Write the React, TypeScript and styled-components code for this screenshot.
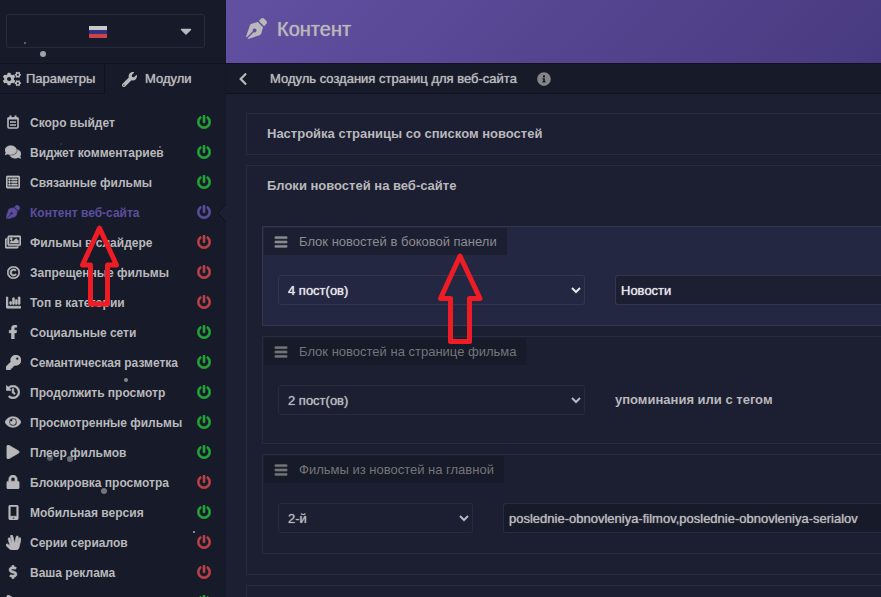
import React from "react";
import styled, { createGlobalStyle, css } from "styled-components";
import type { IconType } from "react-icons";
import {
  FaBars, FaCaretDown, FaChartBar, FaChevronLeft, FaCogs, FaComments, FaDollarSign,
  FaEye, FaFacebookF, FaHandSpock, FaHistory, FaInfoCircle, FaKey, FaLock, FaMobileAlt,
  FaPenNib, FaPlay, FaPowerOff, FaRegCopyright, FaRegImages, FaRegListAlt, FaWrench,
} from "react-icons/fa";

const colors = {
  side: "#161a29",
  page: "#1c1e32",
  line: "#282b3e",
  dark: "#10131f",
  text: "#b9b9bb",
  accent: "#5e4d9e",
  on: "#24a538",
  off: "#bc4248",
};

const GlobalStyle = createGlobalStyle`
  *, *::before, *::after { box-sizing: border-box; }
  body {
    margin: 0;
    background: ${colors.page};
    color: ${colors.text};
    font: 700 13px/20px "Liberation Sans", Arial, sans-serif;
  }
  button, select, input { font: inherit; color: inherit; }
  h1, h2, ul { margin: 0; padding: 0; }
`;

const Page = styled.div`
  position: relative;
  display: flex;
  height: 100vh;
  overflow: hidden;
`;

const Sidebar = styled.aside`
  flex: 0 0 226px;
  background: ${colors.side};
  border-right: 1px solid #14172a;
`;

const LanguageArea = styled.div`
  height: 63px;
  padding: 14px 20px 0 6px;
`;

const LanguageButton = styled.button`
  display: flex;
  align-items: center;
  width: 100%;
  height: 34px;
  padding: 0 9px 0 12px;
  background: none;
  border: 1px solid ${colors.line};
  border-radius: 3px;
  > svg:first-child { margin: 2px auto 0; }
`;

const Tabs = styled.nav`
  display: flex;
  height: 44px;
  border-top: 1px solid ${colors.dark};
`;

const Tab = styled.button<{ $first?: boolean }>`
  display: flex;
  align-items: center;
  gap: ${(p) => (p.$first ? 5 : 8)}px;
  flex: 0 0 ${(p) => (p.$first ? 105 : 120)}px;
  height: 30px;
  padding: 0 0 0 ${(p) => (p.$first ? 3 : 17)}px;
  background: none;
  border: 0;
  font-weight: 400;
  text-shadow: 0 0 1px ${colors.text};
  ${(p) => p.$first && css`
    border-right: 1px solid ${colors.dark};
    border-bottom: 1px solid ${colors.dark};
  `}
`;

const ModuleList = styled.ul`list-style: none;`;

const ModuleRow = styled.li<{ $active?: boolean }>`
  position: relative;
  display: flex;
  align-items: center;
  height: 30px;
  padding-right: 14px;
  color: ${(p) => (p.$active ? colors.accent : colors.text)};
`;

const ModuleLink = styled.a`
  display: flex;
  align-items: center;
  flex: 1;
  color: inherit;
  text-decoration: none;
  font-size: 12px;
  white-space: nowrap;
`;

const ModuleLabel = styled.span`padding-top: 2px;`;

const IconCell = styled.span`
  display: grid;
  place-items: center;
  flex: 0 0 26px;
  margin-right: 4px;
  > svg { stroke-width: 22; }
`;

const PowerButton = styled.button<{ $color: string }>`
  display: flex;
  padding: 0;
  border: 0;
  background: none;
  color: ${(p) => p.$color};
  > svg { stroke-width: 16; }
`;

const Notch = styled.svg`
  position: absolute;
  right: -1px;
  top: 7px;
`;

const Main = styled.main`
  flex: 1;
  min-width: 0;
`;

const Banner = styled.header`
  display: flex;
  align-items: center;
  gap: 10px;
  height: 63px;
  padding: 0 20px 6px;
  background: linear-gradient(135deg, #6250a1 0%, #483a80 100%);
`;

const Title = styled.h1`
  font-size: 20px;
  line-height: 24px;
  font-weight: 400;
  text-shadow: 0 0 1px ${colors.text};
`;

const SubBar = styled.div`
  display: flex;
  align-items: center;
  height: 31px;
  padding-left: 10px;
  background: ${colors.side};
  border-top: 1px solid ${colors.dark};
  border-bottom: 1px solid ${colors.dark};
`;

const IconButton = styled.button`
  display: flex;
  padding: 0;
  border: 0;
  background: none;
`;

const SubTitle = styled.h2`
  margin: 0 20px;
  font-size: 13px;
  line-height: 20px;
  font-weight: 400;
  text-shadow: 0 0 1px ${colors.text};
  white-space: nowrap;
`;

const Content = styled.div`
  display: flex;
  flex-direction: column;
  gap: 10px;
  padding: 19px 0 0 20px;
`;

const Panel = styled.section`
  flex: none;
  min-height: 42px;
  border: 1px solid ${colors.line};
  border-right: 0;
`;

const PanelTitle = styled.h2`
  padding: 10px 20px;
  font-size: 13px;
  line-height: 20px;
`;

const Blocks = styled.div`
  display: flex;
  flex-direction: column;
  gap: 10px;
  padding: 20px 0 20px 15px;
`;

const Block = styled.section<{ $lit?: boolean; $tall?: boolean }>`
  padding: 1px 0 ${(p) => (p.$tall ? 28 : 20)}px 1px;
  border: 1px solid ${(p) => (p.$lit ? "#34374c" : colors.line)};
  border-right: 0;
  background: ${(p) => (p.$lit ? "#242741" : "transparent")};
  color: ${(p) => (p.$lit ? "#e6e6e8" : colors.text)};
`;

const BlockTitle = styled.h2<{ $lit?: boolean }>`
  display: inline-flex;
  align-items: center;
  gap: 11px;
  height: 27px;
  padding: 0 10px;
  background: ${(p) => (p.$lit ? colors.page : colors.side)};
  color: ${(p) => (p.$lit ? "#8c8c8f" : "#757578")};
  font-size: 13px;
  font-weight: 400;
  vertical-align: top;
  > svg { stroke-width: 24; }
`;

const Fields = styled.div<{ $narrow?: boolean }>`
  display: grid;
  grid-template-columns: ${(p) => (p.$narrow ? 195 : 307)}px 1fr;
  column-gap: 30px;
  align-items: center;
  padding: 20px 0 0 14px;
`;

const control = css`
  width: 100%;
  height: 30px;
  font-weight: 400;
  text-shadow: 0 0 1px currentColor;
  outline: 0;
`;

const Select = styled.select<{ $lit?: boolean }>`
  ${control}
  padding: 0 6px 0 5px;
  background: ${(p) => (p.$lit ? "#242741" : colors.page)};
  border: 1px solid ${(p) => (p.$lit ? "#34374c" : colors.line)};
  border-radius: 3px;
`;

const TextInput = styled.input<{ $lit?: boolean }>`
  ${control}
  padding: 0 5px;
  background: ${(p) => (p.$lit ? colors.page : colors.side)};
  border: 1px solid ${(p) => (p.$lit ? "#34374c" : colors.line)};
  border-right: 0;
  border-radius: 3px 0 0 3px;
`;

const Overlay = styled.svg`
  position: absolute;
  inset: 0;
  pointer-events: none;
`;

const CalendarIcon = ({ size = 14 }: { size?: number }) => (
  <svg width={size} height={size} viewBox="0 0 14 14" aria-hidden="true">
    <g fill="none" stroke="currentColor">
      <rect x="2" y="3" width="10" height="10" rx="1" strokeWidth="1.6" />
      <path d="M1.500 3.500H12.500" strokeWidth="2" />
      <path d="M4.500 0.500V3M9.500 0.500V3" strokeWidth="2" />
      <path d="M4 7H10M4 10H10" strokeWidth="1.500" />
    </g>
  </svg>
);

const Flag = () => (
  <svg width="18" height="12" role="img" aria-label="Русский">
    <rect width="18" height="4" fill="#c9c9c9" />
    <rect y="4" width="18" height="4" fill="#37307f" />
    <rect y="8" width="18" height="4" fill="#c94349" />
  </svg>
);

type Module = { label: string; icon: IconType | typeof CalendarIcon; on?: boolean; active?: boolean; size?: number };

const modules: Module[] = [
  { label: "Скоро выйдет", icon: CalendarIcon, on: true },
  { label: "Виджет комментариев", icon: FaComments, on: true, size: 16 },
  { label: "Связанные фильмы", icon: FaRegListAlt, on: true },
  { label: "Контент веб-сайта", icon: FaPenNib, active: true },
  { label: "Фильмы в слайдере", icon: FaRegImages, size: 16 },
  { label: "Запрещенные фильмы", icon: FaRegCopyright, size: 13 },
  { label: "Топ в категории", icon: FaChartBar, size: 15 },
  { label: "Социальные сети", icon: FaFacebookF, on: true },
  { label: "Семантическая разметка", icon: FaKey, on: true, size: 15 },
  { label: "Продолжить просмотр", icon: FaHistory, on: true },
  { label: "Просмотренные фильмы", icon: FaEye, on: true, size: 16 },
  { label: "Плеер фильмов", icon: FaPlay, on: true },
  { label: "Блокировка просмотра", icon: FaLock },
  { label: "Мобильная версия", icon: FaMobileAlt, on: true, size: 15 },
  { label: "Серии сериалов", icon: FaHandSpock, size: 15 },
  { label: "Ваша реклама", icon: FaDollarSign },
  { label: "", icon: FaPlay, on: true },
];

const particles: [number, number, number, number][] = [
  [25, 43, 1, 0.5], [43, 54, 3, 0.75], [126, 380, 2, 0.6], [110, 420, 2, 0.3],
  [50, 458, 3, 0.35], [70, 459, 3, 0.45], [104, 491, 3, 0.5], [194, 532, 1, 0.8],
  [160, 147, 1, 0.5], [61, 144, 1, 0.15],
];

type BlockProps = {
  title: string; choice: string; name: string; value?: string; note?: string;
  lit?: boolean; narrow?: boolean; tall?: boolean;
};

const NewsBlock = ({ title, choice, name, value, note, lit, narrow, tall }: BlockProps) => (
  <Block $lit={lit} $tall={tall}>
    <BlockTitle $lit={lit}><FaBars size={14} />{title}</BlockTitle>
    <Fields $narrow={narrow}>
      <Select $lit={lit} aria-label={title} name={name} defaultValue={choice}>
        <option>{choice}</option>
      </Select>
      {note ? <span>{note}</span> : (
        <TextInput $lit={lit} aria-label={title} name={`${name}-value`} defaultValue={value} />
      )}
    </Fields>
  </Block>
);

export default function App() {
  return (
    <>
      <GlobalStyle />
      <Page>
        <Sidebar>
          <LanguageArea>
            <LanguageButton type="button"><Flag /><FaCaretDown size={18} /></LanguageButton>
          </LanguageArea>
          <Tabs>
            <Tab type="button" $first><FaCogs size={18} />Параметры</Tab>
            <Tab type="button"><FaWrench size={15} />Модули</Tab>
          </Tabs>
          <ModuleList>
            {modules.map(({ label, icon: Icon, on, active, size }, i) => (
              <ModuleRow key={i} $active={active}>
                <ModuleLink href="#">
                  <IconCell><Icon size={size ?? 14} /></IconCell>
                  <ModuleLabel>{label}</ModuleLabel>
                </ModuleLink>
                <PowerButton type="button" aria-label={label} $color={active ? colors.accent : on ? colors.on : colors.off}>
                  <FaPowerOff size={14} />
                </PowerButton>
                {active && (
                  <Notch width="8" height="18" viewBox="0 0 8 18">
                    <path d="M8 0L0 9L8 18Z" fill={colors.page} />
                    <path d="M8 0L0 9L8 18" fill="none" stroke={colors.dark} />
                  </Notch>
                )}
              </ModuleRow>
            ))}
          </ModuleList>
        </Sidebar>
        <Main>
          <Banner><FaPenNib size={21} /><Title>Контент</Title></Banner>
          <SubBar>
            <IconButton type="button" aria-label="Назад"><FaChevronLeft size={14} /></IconButton>
            <SubTitle>Модуль создания страниц для веб-сайта</SubTitle>
            <FaInfoCircle size={14} color="#858587" />
          </SubBar>
          <Content>
            <Panel><PanelTitle>Настройка страницы со списком новостей</PanelTitle></Panel>
            <Panel>
              <PanelTitle>Блоки новостей на веб-сайте</PanelTitle>
              <Blocks>
                <NewsBlock lit name="side" title="Блок новостей в боковой панели" choice="4 пост(ов)" value="Новости" />
                <NewsBlock tall name="film" title="Блок новостей на странице фильма" choice="2 пост(ов)" note="упоминания или с тегом" />
                <NewsBlock narrow name="home" title="Фильмы из новостей на главной" choice="2-й" value="poslednie-obnovleniya-filmov,poslednie-obnovleniya-serialov" />
              </Blocks>
            </Panel>
            <Panel />
          </Content>
        </Main>
        <Overlay width="881" height="597" aria-hidden="true">
          {particles.map(([cx, cy, r, opacity], i) => (
            <circle key={i} cx={cx} cy={cy} r={r} fill="#d0d0d0" opacity={opacity} />
          ))}
          <g fill="none" stroke="#ee1c24" strokeWidth="5" strokeLinejoin="round">
            <path d="M99.5 228L116.5 265H107.5V304H90.5V265H82.5Z" />
            <path d="M460 256L480 298.5H469.5V341.5H450.5V298.5H440.5Z" />
          </g>
        </Overlay>
      </Page>
    </>
  );
}
